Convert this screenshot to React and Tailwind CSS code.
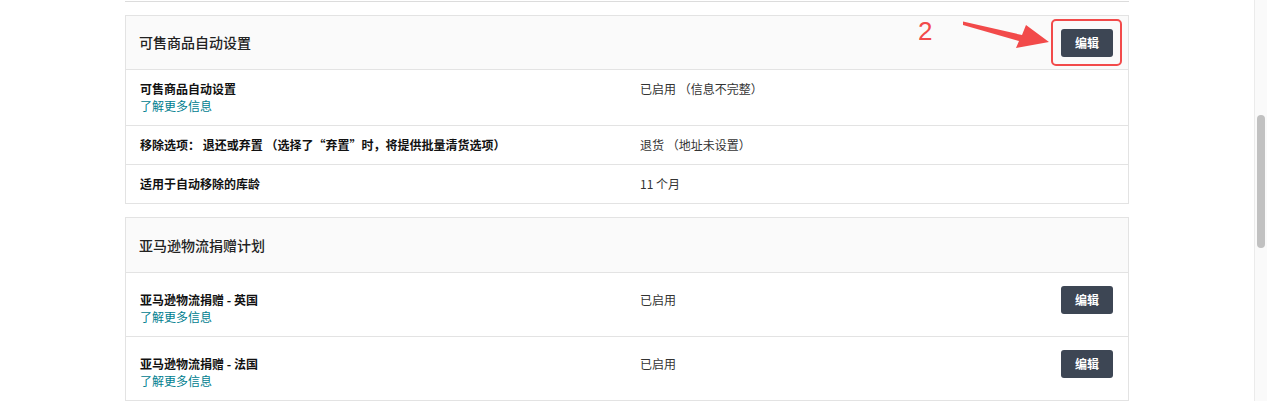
import React from 'react'

const font = { fontFamily: '"Noto Sans CJK SC", "Noto Sans", sans-serif' }

const EditButton = () => (
    <button className="h-[28px] w-[52px] rounded-[3px] bg-[#3d4654] text-[12px] font-bold text-white">
        编辑
    </button>
)

const Row = ({ label, value, link, button }) => (
    <div className={`flex items-start border-t border-[#e3e3e3] ${button ? 'pt-[13px] pb-[11px]' : 'pt-[10px] pb-[11px]'}`}>
        <div className={`w-[514px] pl-[14px] ${button ? 'mt-[5px]' : ''}`}>
            <p className="text-[12px] leading-[17px] font-bold text-[#111]">{label}</p>
            {link && <p className="text-[12px] leading-[17px] text-[#00808f]">了解更多信息</p>}
        </div>
        <div className={`flex-1 text-[12px] leading-[17px] text-[#333] ${button ? 'mt-[5px]' : ''}`}>{value}</div>
        {button && <div className="pr-[15px]"><EditButton /></div>}
    </div>
)

const App = () => {
    return (
        <div className="flex h-[401px] w-full overflow-hidden bg-white" style={font}>
            <div className="flex-1">
                <div className="mx-auto w-[1004px]">
                    <div className="h-[2px] border-b border-[#dcdcdc]" />

                    {/* CARD 1 */}
                    <div className="mt-[13px] border border-[#e3e3e3]">
                        <div className="relative flex h-[53px] items-center justify-between bg-[#fafafa] pl-[13px] pr-[15px]">
                            <h2 className="text-[14px] font-medium text-[#222]">可售商品自动设置</h2>
                            <EditButton />

                            {/* annotation */}
                            <span
                                className="absolute left-[792px] top-[0px] text-[26px] leading-[30px] text-[#f24a4a]"
                                style={{ fontFamily: '"Liberation Sans", Arial, sans-serif' }}
                            >
                                2
                            </span>
                            <svg className="absolute left-[830px] top-[-1px]" width="100" height="40" viewBox="955 15 100 40">
                                <polygon
                                    points="962,21.5 1021,35 1025,25 1048,42 1015,48 1018,41 962,25"
                                    fill="#f24a4a"
                                />
                            </svg>
                            <div className="absolute left-[925px] top-[3px] h-[47px] w-[71px] rounded-[5px] border-[2.5px] border-[#f24a4a]" />
                        </div>
                        <Row label="可售商品自动设置" value="已启用 （信息不完整）" link />
                        <Row label="移除选项： 退还或弃置 （选择了“弃置”时，将提供批量清货选项）" value="退货 （地址未设置）" />
                        <Row label="适用于自动移除的库龄" value="11 个月" />
                    </div>

                    {/* CARD 2 */}
                    <div className="mt-[13px] border border-[#e3e3e3]">
                        <div className="flex h-[54px] items-center bg-[#fafafa] pl-[13px]">
                            <h2 className="text-[14px] font-medium text-[#222]">亚马逊物流捐赠计划</h2>
                        </div>
                        <Row label="亚马逊物流捐赠 - 英国" value="已启用" link button />
                        <Row label="亚马逊物流捐赠 - 法国" value="已启用" link button />
                    </div>
                </div>
            </div>

            {/* SCROLLBAR */}
            <div className="w-[13px] border-l border-[#ebebeb] bg-[#fafafa] pt-[115px] pl-[2px]">
                <div className="h-[133px] w-[8px] rounded-full bg-[#c1c1c1]" />
            </div>
        </div>
    )
}

export default App
